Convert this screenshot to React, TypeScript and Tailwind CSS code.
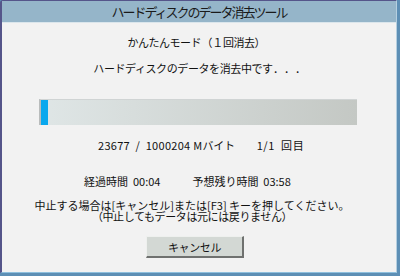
import React from "react";

export default function App() {
  const jp = { fontFamily: '"Noto Sans CJK JP", "Noto Sans", sans-serif' };
  return (
    <div
      className="w-[400px] h-[276px] bg-[#5d8fb5] overflow-hidden"
      style={jp}
    >
      <div className="w-[397px] h-[273px] border-l-2 border-t border-[#55558a] rounded-tl-[3px] bg-[#f2f2f2] flex flex-col border-r border-r-[#b5cfe0] border-b border-b-[#8fc0de]">
        <div className="h-[22px] bg-[#95b5c9] border-b border-[#dbe6ec] flex items-center justify-center text-[13px] tracking-[-2px] text-[#1a1a1a] leading-none">
          ハードディスクのデータ消去ツール
        </div>
        <div className="flex flex-col text-[11px] leading-[12px] text-[#111]">
          <div className="mt-[13px] h-[12px] flex justify-center pr-[8px] tracking-[-0.5px] whitespace-pre">
            <span>かんたんモード</span>
            <span className="inline-block w-[11px] text-right">（</span>
            <span className="inline-block w-[11px] text-center">１</span>
            <span>回消去</span>
            <span className="inline-block w-[8px] text-left">）</span>
          </div>
          <div className="mt-[14px] h-[12px] flex justify-center pl-[1px] tracking-[-0.4px]">
            <span>ハードディスクのデータを消去中です</span>
            <span className="inline-block w-[11px] text-center">．</span>
            <span className="inline-block w-[11px] text-center">．</span>
            <span className="inline-block w-[11px] text-center">．</span>
          </div>
          <div className="mt-[25px] ml-[37px] w-[318px] h-[26px] border-l-2 border-[#b9bcbc] border-t border-t-[#d0d4d4] bg-gradient-to-r from-[#dfe6e6] to-[#c4c8c4] flex">
            <div className="w-[7px] h-full bg-[#09a8ee]" />
          </div>
          <div className="mt-[14px] h-[12px] flex pl-[96px] whitespace-pre">
            <span className="tracking-[0.3px]">23677  /  1000204 M</span>
            <span className="tracking-[-0.3px]">バイト</span>
            <span className="ml-[22px] tracking-[0.6px]">1/1  回目</span>
          </div>
          <div className="mt-[24px] h-[12px] flex pl-[82px] whitespace-pre">
            <span className="tracking-[0px]">経過時間  00:04</span>
            <span className="ml-[32px] tracking-[0px]">予想残り時間  03:58</span>
          </div>
          <div className="mt-[12px] h-[12px] text-center pr-[14px] tracking-[0px] whitespace-pre">
            中止する場合は[キャンセル]または[F3] キーを押してください。
          </div>
          <div className="h-[11px] leading-[11px] text-center pr-[14px] tracking-[-0.4px] whitespace-pre">
            （中止してもデータは元には戻りません）
          </div>
          <div className="mt-[14px] ml-[144px] w-[98px] h-[22px] bg-[#d3d8d4] border-t border-l border-[#eef0ee] border-r-2 border-b-2 border-r-[#6f716f] border-b-[#6f716f] flex items-center justify-center tracking-[-0.4px]">
            キャンセル
          </div>
        </div>
      </div>
    </div>
  );
}
